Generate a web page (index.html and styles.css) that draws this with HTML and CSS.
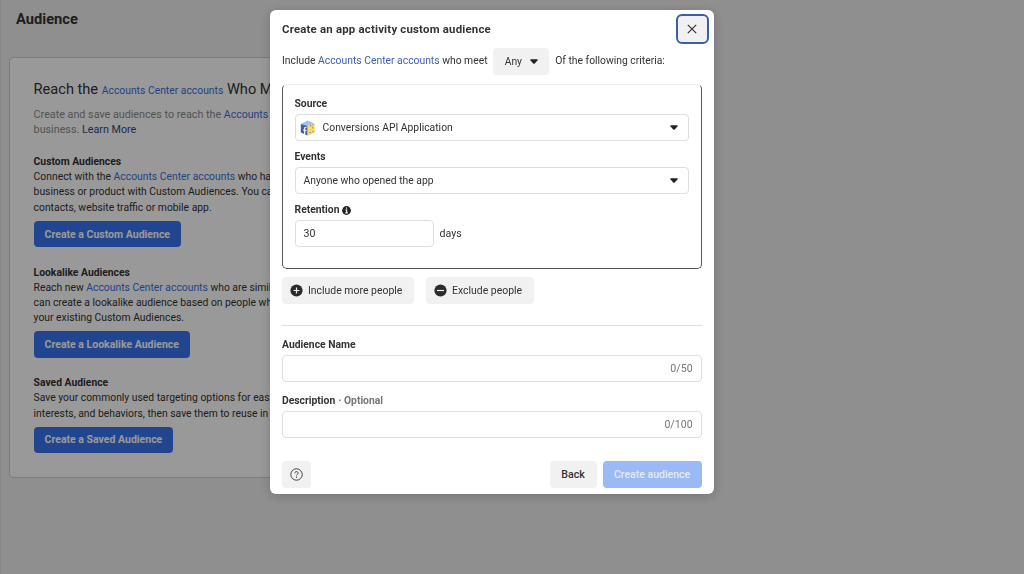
FILE: index.html
```html
<!DOCTYPE html>
<html lang="en">
<head>
  <meta charset="utf-8">
  <title>Audience</title>
  <link rel="stylesheet" href="styles.css">
</head>
<body>
  <main class="page">
    <h1>Audience</h1>
    <div class="card">
      <h2>Reach the <a>Accounts Center accounts</a> Who Matter</h2>
      <p class="intro">Create and save audiences to reach the <a>Accounts</a><br>business. <a class="learn">Learn More</a></p>

      <section>
        <h3>Custom Audiences</h3>
        <p>Connect with the <a>Accounts Center accounts</a> who have<br>business or product with Custom Audiences. You can<br>contacts, website traffic or mobile app.</p>
        <button class="primary">Create a Custom Audience</button>
      </section>

      <section>
        <h3>Lookalike Audiences</h3>
        <p>Reach new <a>Accounts Center accounts</a> who are similar<br>can create a lookalike audience based on people who<br>your existing Custom Audiences.</p>
        <button class="primary">Create a Lookalike Audience</button>
      </section>

      <section>
        <h3>Saved Audience</h3>
        <p>Save your commonly used targeting options for easy<br>interests, and behaviors, then save them to reuse in</p>
        <button class="primary">Create a Saved Audience</button>
      </section>
    </div>
  </main>

  <div class="overlay">
    <div class="modal">
      <header>
        <h4>Create an app activity custom audience</h4>
        <button class="close">
          <svg width="12" height="12" viewBox="0 0 12 12"><path d="M1.8 1.8l8.4 8.4M10.2 1.8l-8.4 8.4" stroke="#333" stroke-width="1.2" fill="none"/></svg>
        </button>
      </header>

      <div class="criteria">
        <span>Include <a>Accounts Center accounts</a> who meet</span>
        <button class="any">Any
          <svg width="8" height="5" viewBox="0 0 8 5"><path d="M.8.3h6.4q.8.2.4.9L4.8 4.5q-.8.7-1.6 0L.4 1.2Q0 .5.8.3z" fill="#222"/></svg>
        </button>
        <span>Of the following criteria:</span>
      </div>

      <div class="rules">
        <label>Source</label>
        <div class="select source">
          <svg class="app-icon" width="16" height="16" viewBox="0 0 16 16">
            <path d="M.8 4L7.500.4 14.200 3.500 7.500 6z" fill="#a3bff2"/>
            <path d="M.8 4l6.900 2v9.600L.8 12.600z" fill="#42609f"/>
            <path d="M7.500 6l6.300-2.600 1.300 1-.8 1.900.8 1.600-.8 1.700.8 1.600-1.100 1.800-6.500 2.600z" fill="#f7d675"/>
            <path d="M6.600 7.500C5 7 4.600 7.700 4.600 9v5.300M3.200 9.800l3.200.9" stroke="#e8eefb" stroke-width="1.300" fill="none"/>
            <path d="M10 5.600h1.200M12.500 4.800h1M12 7.800h1M9.500 12.500h1M12.500 11.500h1" stroke="#7c6b3d" stroke-width=".9"/>
          </svg>
          <span>Conversions API Application</span>
          <svg class="arrow" width="8" height="5" viewBox="0 0 8 5"><path d="M.8.3h6.4q.8.2.4.9L4.8 4.5q-.8.7-1.6 0L.4 1.2Q0 .5.8.3z" fill="#222"/></svg>
        </div>

        <label>Events</label>
        <div class="select">
          <span>Anyone who opened the app</span>
          <svg class="arrow" width="8" height="5" viewBox="0 0 8 5"><path d="M.8.3h6.4q.8.2.4.9L4.8 4.5q-.8.7-1.6 0L.4 1.2Q0 .5.8.3z" fill="#222"/></svg>
        </div>

        <label>Retention
          <svg width="9" height="9" viewBox="0 0 9 9"><circle cx="4.500" cy="4.500" r="4.400" fill="#222"/><path d="M4.500 1.500v1.300M3.400 4h1.300v2.700M3.300 6.900h2.500" stroke="#fff" stroke-width="1.100" fill="none"/></svg>
        </label>
        <div class="retention">
          <div class="select days">30</div>
          <span>days</span>
        </div>
      </div>

      <div class="people">
        <button>
          <svg width="13" height="13" viewBox="0 0 13 13"><circle cx="6.500" cy="6.500" r="6.100" fill="#2b2b2b"/><path d="M6.500 3.600v5.800M3.600 6.500h5.800" stroke="#f1f1f1" stroke-width="1.200"/></svg>
          Include more people
        </button>
        <button>
          <svg width="13" height="13" viewBox="0 0 13 13"><circle cx="6.500" cy="6.500" r="6.100" fill="#2b2b2b"/><path d="M3 6.500h7" stroke="#f1f1f1" stroke-width="1.200"/></svg>
          Exclude people
        </button>
      </div>

      <hr>

      <label>Audience Name</label>
      <div class="field">0/50</div>
      <label>Description <span class="optional">· Optional</span></label>
      <div class="field">0/100</div>

      <footer>
        <button class="help">
          <svg width="13" height="13" viewBox="0 0 13 13"><circle cx="6.500" cy="6.500" r="5.700" fill="none" stroke="#444" stroke-width="1"/><path d="M4.800 5.300c0-2.300 3.400-2.200 3.400-.2 0 1.200-1.700 1.200-1.700 2.400" fill="none" stroke="#444" stroke-width="1"/><circle cx="6.500" cy="9.200" r=".7" fill="#444"/></svg>
        </button>
        <button class="back">Back</button>
        <button class="create">Create audience</button>
      </footer>
    </div>
  </div>
</body>
</html>
```

FILE: styles.css
```css
* {
  box-sizing: border-box;
}

body {
  margin: 0;
  height: 574px;
  overflow: hidden;
  background: #eeeeee;
  color: #333;
  font-family: Roboto, sans-serif;
  font-size: 10.35px;
  line-height: 15.2px;
}

h1, h2, h3, h4, p {
  margin: 0;
}

a {
  color: #3b62bb;
}

button {
  display: flex;
  align-items: center;
  justify-content: center;
  height: 27px;
  padding: 0 11px;
  border: none;
  border-radius: 4px;
  background: #f1f1f1;
  color: #333;
  font: inherit;
  white-space: nowrap;
}

svg {
  flex: none;
}

.page {
  height: 574px;
  padding: 9px 0 0 8px;
  border-left: 1px solid #e2e2e2;
}

.page h1 {
  padding-left: 7px;
  font-size: 14.7px;
  line-height: 20px;
}

.card {
  width: 600px;
  height: 421px;
  margin-top: 28px;
  padding: 21px 24px 21px 23.6px;
  border: 1px solid #d0d0d0;
  border-radius: 4px;
  background: #fff;
  white-space: nowrap;
}

.card a {
  color: #3b70d8;
}

.card h2 {
  font-size: 14.6px;
  font-weight: 400;
  line-height: 20px;
}

.card h2 a {
  font-size: 10.35px;
}

.intro {
  margin: 6px 0 16.6px;
  color: #8b8b8b;
  font-size: 10.75px;
}

.intro a {
  font-size: 10.5px;
}

.card a.learn {
  color: #344a78;
  font-size: 10.75px;
}

.card h3 {
  font-size: 10.35px;
  line-height: 15.2px;
}

.card section {
  margin-bottom: 17.2px;
}

.primary {
  margin-top: 6px;
  height: 26.6px;
  background: #3775ee;
  color: #fff;
  font-size: 10.5px;
  font-weight: 700;
}

.overlay {
  position: fixed;
  inset: 0;
  padding: 10px 0 0 270px;
  background: rgba(0, 0, 0, 0.4);
}

.modal {
  width: 443.6px;
  height: 484px;
  padding: 4px 12px 0;
  border-radius: 6px;
  background: #fff;
  box-shadow: 0 2px 12px rgba(0, 0, 0, 0.2);
}

.modal header {
  display: flex;
  align-items: center;
  justify-content: space-between;
  height: 30px;
}

.modal h4 {
  padding-top: 1px;
  font-size: 11.4px;
  letter-spacing: 0.2px;
}

.close {
  width: 33px;
  height: 30px;
  margin-right: -7px;
  padding: 0;
  border: 2px solid #3b5ea8;
  border-radius: 6px;
}

.criteria {
  display: flex;
  height: 27px;
  margin-top: 4px;
  gap: 5.8px;
}

.criteria > span {
  line-height: 25px;
}

.any {
  width: 56px;
  gap: 8px;
}

.rules {
  height: 185px;
  margin-top: 9px;
  padding: 11px 12px 11px 11.5px;
  border: 1px solid #555;
  border-top-color: #eee;
  border-radius: 5px;
}

label {
  display: flex;
  align-items: center;
  gap: 3px;
  font-weight: 700;
}

.select {
  display: flex;
  align-items: center;
  height: 27px;
  margin: 3px 0 8px;
  padding: 0 10px 0 8px;
  border: 1px solid #dedede;
  border-radius: 4px;
}

.source {
  padding-left: 4px;
}

.app-icon {
  margin-right: 7px;
}

.arrow {
  margin-left: auto;
}

.retention {
  display: flex;
  align-items: baseline;
  gap: 6px;
  margin-top: -1px;
  font-size: 10.6px;
}

.days {
  width: 139px;
}

.people {
  display: flex;
  gap: 12px;
  margin-top: 8px;
}

.people button {
  gap: 5px;
  padding: 0 11.7px 0 8px;
  font-size: 10.45px;
}

hr {
  margin: 21px 0 11px;
  border: 0;
  border-top: 1px solid #dedede;
}

.field {
  display: flex;
  align-items: center;
  justify-content: flex-end;
  height: 27px;
  margin: 3px 0 11px;
  padding: 0 8px;
  border: 1px solid #dedede;
  border-radius: 4px;
  color: #777;
  font-size: 10.6px;
}

.optional {
  color: #777;
}

footer {
  display: flex;
  gap: 6px;
  margin-top: 23px;
}

.help {
  width: 29px;
  margin-right: auto;
  padding: 0;
}

.back {
  width: 47px;
  font-size: 10.6px;
  font-weight: 500;
}

.create {
  width: 99px;
  background: #9bb9f2;
  color: #e3e9f5;
  font-size: 10.5px;
  font-weight: 500;
}
```
